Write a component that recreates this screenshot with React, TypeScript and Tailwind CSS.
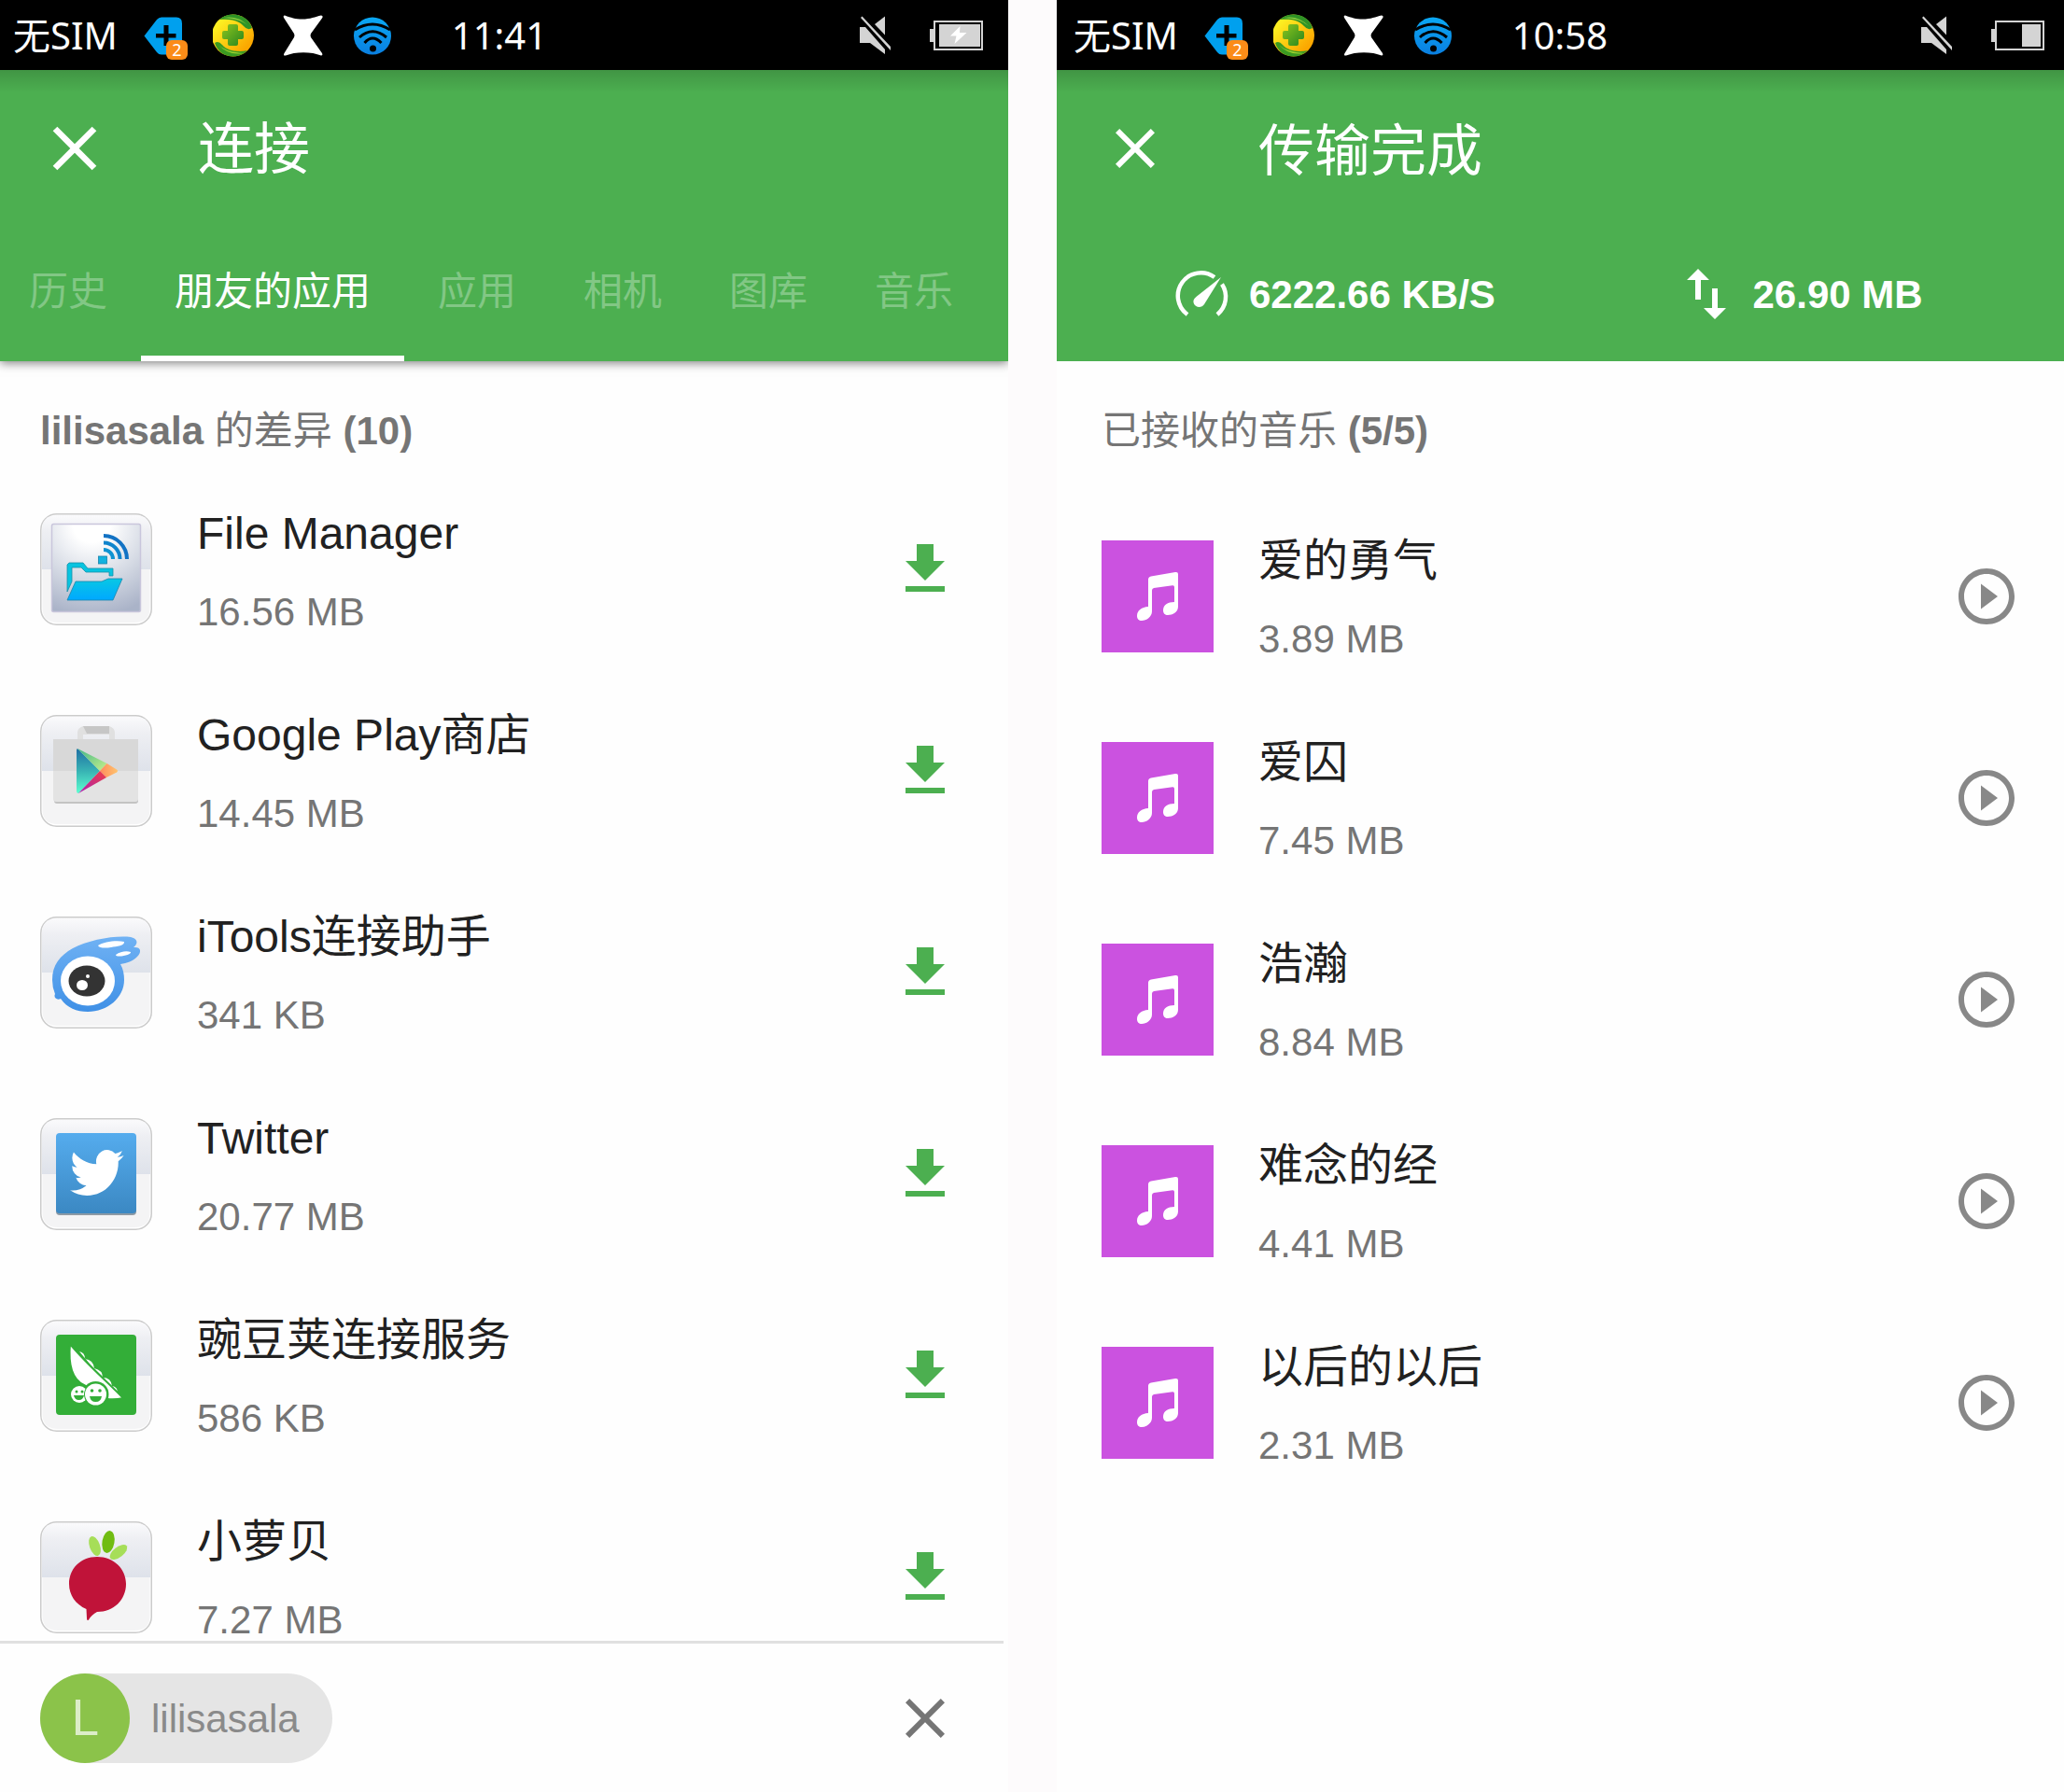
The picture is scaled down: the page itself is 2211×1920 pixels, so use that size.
import React from 'react';
import { MdClear, MdPlayCircleOutline, MdSwapVert } from 'react-icons/md';

const tabs = ['历史', '朋友的应用', '应用', '相机', '图库', '音乐'];

const apps = [
  { name: 'File Manager', size: '16.56 MB', art: <FileManagerArt /> },
  { name: 'Google Play商店', size: '14.45 MB', art: <PlayStoreArt /> },
  { name: 'iTools连接助手', size: '341 KB', art: <IToolsArt /> },
  { name: 'Twitter', size: '20.77 MB', art: <TwitterArt /> },
  { name: '豌豆荚连接服务', size: '586 KB', art: <PeaPodArt /> },
  { name: '小萝贝', size: '7.27 MB', art: <RadishArt /> },
];

const songs = [
  { name: '爱的勇气', size: '3.89 MB' },
  { name: '爱囚', size: '7.45 MB' },
  { name: '浩瀚', size: '8.84 MB' },
  { name: '难念的经', size: '4.41 MB' },
  { name: '以后的以后', size: '2.31 MB' },
];

function FileManagerArt() {
  return (
    <g>
      <defs>
        <radialGradient id="fmPlate" cx="0.45" cy="0" r="1.05">
          <stop offset="0.2" stopColor="#ffffff" />
          <stop offset="0.6" stopColor="#d5dae4" />
          <stop offset="1" stopColor="#aab3c8" />
        </radialGradient>
        <linearGradient id="fmFolder" x1="0" y1="0" x2="0" y2="1">
          <stop offset="0" stopColor="#08c8e4" />
          <stop offset="1" stopColor="#00a8ff" />
        </linearGradient>
      </defs>
      <rect x="12.5" y="11.5" width="95" height="94" rx="2" fill="url(#fmPlate)" stroke="#c9c6dc" strokeWidth="1.5" />
      <path d="M29 55l2-2h15l5 6h27v8h-4v-4H49l-5-5H34v15l-5 11z" fill="#08c4e0" stroke="#1b8fa8" strokeWidth="0.8" />
      <path d="M29 93l9-20h28l7-3h15l-10 23z" fill="url(#fmFolder)" stroke="#1b86ac" strokeWidth="0.8" />
      <rect x="62.500" y="46" width="9" height="8" fill="#12b2e0" stroke="#1783ac" strokeWidth="0.8" />
      <g fill="none" strokeWidth="4">
        <path d="M68 39a10 10 0 0 1 10 10" stroke="#0f93d2" />
        <path d="M68 31.500a17.500 17.500 0 0 1 17.500 17.500" stroke="#0f84cc" />
        <path d="M68 24a25 25 0 0 1 25 25" stroke="#1272c4" />
      </g>
    </g>
  );
}

function PlayStoreArt() {
  return (
    <g>
      <defs>
        <linearGradient id="gpTeal" x1="0" y1="0" x2="0" y2="1">
          <stop offset="0" stopColor="#1f6fa4" />
          <stop offset="0.5" stopColor="#38b3b4" />
          <stop offset="1" stopColor="#5dffd0" />
        </linearGradient>
        <linearGradient id="gpGreen" x1="0" y1="0" x2="1" y2="1">
          <stop offset="0" stopColor="#3fb787" />
          <stop offset="1" stopColor="#c9f08c" />
        </linearGradient>
        <linearGradient id="gpRed" x1="1" y1="0" x2="0" y2="1">
          <stop offset="0" stopColor="#f03e44" />
          <stop offset="1" stopColor="#a81fb4" />
        </linearGradient>
        <linearGradient id="gpOrange" x1="0" y1="0" x2="1" y2="0">
          <stop offset="0" stopColor="#ff8a5c" />
          <stop offset="1" stopColor="#ffc46e" />
        </linearGradient>
      </defs>
      <path d="M40 27v-8q0-5 6-7h28q6 2 6 7v8h-6v-6H46v6z" fill="#e0e0e0" />
      <path d="M46 12h28v8H50z" fill="#c6c6c6" />
      <rect x="15" y="28" width="90" height="67" rx="3" fill="#c3c3c3" />
      <path d="M14 26h91v64q0 3-3 3H17q-3 0-3-3z" fill="#e3e3e3" />
      <path d="M14 26h91v34H14z" fill="#d8d8d8" />
      <path d="M39 38q0-3 2-1l23 23-23 24q-2 0-2-3z" fill="url(#gpTeal)" />
      <path d="M40 36l31.500 16L64 60z" fill="url(#gpGreen)" />
      <path d="M71.500 52L82 58.500q2 1.500 0 3L71 67l-7-7z" fill="url(#gpOrange)" />
      <path d="M64 60l7 7-30 17z" fill="url(#gpRed)" />
    </g>
  );
}

function IToolsArt() {
  return (
    <g>
      <defs>
        <linearGradient id="itBlue" x1="0" y1="0" x2="0" y2="1">
          <stop offset="0" stopColor="#70b2f4" />
          <stop offset="1" stopColor="#3f90e6" />
        </linearGradient>
      </defs>
      <path
        d="M13 68C13 52 21 42 35 34C52 25 80 20 97 22C105 24 105 29 100 33C108 32 109 38 104 43C99 48 93 50 86 51C89 56 90 62 90 68C90 87 72 102 51 102C39 102 29 98 22 88C18 90 14 87 16 83Q13 76 13 68Z"
        fill="url(#itBlue)"
      />
      <ellipse cx="51" cy="69" rx="29" ry="26.500" fill="#ffffff" />
      <ellipse cx="50" cy="69" rx="19.500" ry="16.500" fill="#333333" />
      <ellipse cx="45" cy="73.500" rx="6" ry="5.500" fill="#ffffff" />
      <circle cx="51" cy="64" r="2" fill="#ffffff" />
      <path d="M62 31C68 27 82 25 90 27C91 31 82 32 76 33C70 34 63 34 62 31Z" fill="#ffffff" />
      <path d="M81 41C86 37.500 92 36.500 97 38C98 40 91 42.500 85 42.500Q81 42.500 81 41Z" fill="#ffffff" />
    </g>
  );
}

function TwitterArt() {
  return (
    <g>
      <defs>
        <linearGradient id="twBlue" x1="0" y1="0" x2="0" y2="1">
          <stop offset="0" stopColor="#55acee" />
          <stop offset="1" stopColor="#3b88c3" />
        </linearGradient>
      </defs>
      <rect x="17" y="18" width="86" height="86" rx="4" fill="#8d9aa5" />
      <rect x="17" y="16" width="86" height="86" rx="4" fill="url(#twBlue)" />
      <path
        transform="translate(32 28.500) scale(2.400 2.500)"
        fill="#ffffff"
        d="M23.953 4.57a10 10 0 01-2.825.775 4.958 4.958 0 002.163-2.723c-.951.555-2.005.959-3.127 1.184a4.92 4.92 0 00-8.384 4.482C7.69 8.095 4.067 6.13 1.64 3.162a4.822 4.822 0 00-.666 2.475c0 1.71.87 3.213 2.188 4.096a4.904 4.904 0 01-2.228-.616v.06a4.923 4.923 0 003.946 4.827 4.996 4.996 0 01-2.212.085 4.936 4.936 0 004.604 3.417 9.867 9.867 0 01-6.102 2.105c-.39 0-.779-.023-1.17-.067a13.995 13.995 0 007.557 2.209c9.053 0 13.998-7.496 13.998-13.985 0-.21 0-.42-.015-.63A9.935 9.935 0 0024 4.59z"
      />
    </g>
  );
}

function PeaPodArt() {
  return (
    <g>
      <rect x="17" y="16" width="86" height="86" rx="4" fill="#33ae38" />
      <path d="M42 34q6 1 6 8 9 1 10 10 9 2 9 10 9 0 10 9 6 1 6 7l-8-4z" fill="#ffffff" />
      <path d="M32 26C30 48 34 64 47 70L72 85Q80 86 89 84C72 66 52 50 32 26Z" fill="#ffffff" stroke="#33ae38" strokeWidth="2" />
      <circle cx="59.500" cy="80" r="14" fill="#33ae38" />
      <circle cx="42" cy="80" r="10.500" fill="#33ae38" />
      <circle cx="42" cy="80" r="9" fill="#ffffff" />
      <circle cx="59.500" cy="80" r="12.500" fill="#33ae38" />
      <circle cx="59.500" cy="80" r="11.500" fill="#ffffff" />
      <g fill="#33ae38">
        <circle cx="39" cy="77" r="1.500" />
        <circle cx="45" cy="77" r="1.500" />
        <path d="M36 81h11q-1 5-5.500 5t-5.500-5z" />
        <circle cx="55.500" cy="76" r="1.800" />
        <circle cx="64" cy="76" r="1.800" />
        <path d="M53 82h13q-1 6-6.500 6t-6.500-6z" />
      </g>
    </g>
  );
}

function RadishArt() {
  return (
    <g>
      <ellipse cx="58.500" cy="26.500" rx="5.500" ry="11" transform="rotate(-20 58.500 26.500)" fill="#a6de58" />
      <ellipse cx="73" cy="22" rx="6.500" ry="12" transform="rotate(10 73 22)" fill="#70bc12" />
      <ellipse cx="84" cy="33" rx="5.500" ry="11" transform="rotate(52 84 33)" fill="#a6de58" />
      <path d="M61 38C79 38 92 51 92 67C92 84 79 97 61 97Q55 100 52 105.500Q50 107 50 104L49.500 94C38 89 31 79 31 67C31 51 43 38 61 38Z" fill="#c01339" />
    </g>
  );
}

function AppTile({ children }: { children: React.ReactNode }) {
  return (
    <svg viewBox="0 0 120 120" className="size-[120px] shrink-0" aria-hidden="true">
      <defs>
        <linearGradient id="tileTop" x1="0" y1="0" x2="0" y2="1">
          <stop offset="0" stopColor="#fafafc" />
          <stop offset="0.3" stopColor="#eeeff3" />
          <stop offset="1" stopColor="#dee2ea" />
        </linearGradient>
      </defs>
      <rect x="0.75" y="0.75" width="118.500" height="118.500" rx="17" fill="#ffffff" stroke="#cbcbcb" strokeWidth="1.5" />
      <path d="M2 60V18Q2 2 18 2H102Q118 2 118 18V60Z" fill="url(#tileTop)" />
      <path d="M2.500 60H117.500V101Q117.500 117 101 117H19Q2.500 117 2.500 101Z" fill="#f4f4f5" />
      {children}
    </svg>
  );
}

function MusicTile() {
  return (
    <svg viewBox="0 0 120 120" className="size-[120px] shrink-0 bg-[#cb52e0]" aria-hidden="true">
      <path
        d="M50 42Q50 39 53 38.500L79 34Q82 33.500 82 36V71C82 77 76 80 71 80C68 80 66 78 66 75C66 69 71 66 78 66V50Q78 48 76 48.300L56 51Q54 51.500 54 53.500V76C54 82 48 86 43 86C40 86 38 84 38 81C38 75 43 71.500 50 71Z"
        fill="#ffffff"
      />
    </svg>
  );
}

function StatusIcons() {
  return (
    <div className="flex items-center gap-[26px] ml-7">
      <div className="relative size-12">
        <svg viewBox="0 0 48 48" className="size-12">
          <path d="M0.500 24.500L14 7Q16 4.500 19 4.500H35Q41 4.500 41 11V38Q41 44.500 35 44.500H19Q16 44.500 14 42Z" fill="#00a0ee" />
          <path d="M21.500 13h5v9h8v4.500h-8V35h-5v-8.500H13V22h8.500z" fill="#000000" />
        </svg>
        <span className="absolute left-6 top-[29px] w-[23px] h-[21px] rounded-md bg-[#fb8c18] text-white text-[18px] leading-[21px] text-center">
          2
        </span>
      </div>
      <svg viewBox="0 0 48 48" className="size-12">
        <defs>
          <linearGradient id="ballYellow" x1="0" y1="0" x2="1" y2="1">
            <stop offset="0.2" stopColor="#fdee21" />
            <stop offset="0.8" stopColor="#fba700" />
          </linearGradient>
          <linearGradient id="ballGreen" x1="0" y1="0" x2="1" y2="1">
            <stop offset="0" stopColor="#8cc51e" />
            <stop offset="1" stopColor="#27851e" />
          </linearGradient>
        </defs>
        <circle cx="21.500" cy="24" r="22.500" fill="url(#ballYellow)" />
        <path d="M7 7C18 -3 38 1 42 16Q37 19 33 14C27 7 17 6 7 7Z" fill="#2f9326" />
        <path d="M11 5Q27 2 38 14Q30 6 11 5Z" fill="#8ccb3c" />
        <path d="M37 40C26 51 7 48 2 32Q6 29 10 34C16 41 27 42 37 40Z" fill="#3a9a22" />
        <path d="M33 43Q17 46 6 34Q14 42 33 43Z" fill="#9ccf2e" />
        <path d="M18 12h7q2 0 2 2v5h4q2 0 2 2v5q0 2-2 2h-4v5q0 2-2 2h-7q-2 0-2-2v-5h-4q-2 0-2-2v-5q0-2 2-2h4v-5q0-2 2-2z" fill="url(#ballGreen)" />
      </svg>
      <svg viewBox="0 0 48 48" className="size-12">
        <path
          d="M3 2.500C10 5 14 6.500 22 6.500C30 6.500 36 4 42 2.500C44 3 44 4 43 5.500L31 22Q30 24 31 26L43 43Q44 45.500 42 45.500C32 41 14 41 4 45.500Q1 46 2.500 43L13 26Q14 24 13 22L2 5Q1 2.500 3 2.500Z"
          fill="#ffffff"
        />
      </svg>
      <svg viewBox="0 0 48 48" className="size-12">
        <defs>
          <linearGradient id="wifiBlue" x1="0" y1="0" x2="0" y2="1">
            <stop offset="0" stopColor="#0aa8f4" />
            <stop offset="1" stopColor="#0a7fe0" />
          </linearGradient>
        </defs>
        <circle cx="23" cy="24.500" r="20" fill="url(#wifiBlue)" />
        <g fill="none" stroke="#000000" strokeWidth="3">
          <path d="M4 18Q23 6 42 18" />
          <path d="M9 26Q23 13.500 38 26" />
          <path d="M14.500 32Q23 22 32.500 32" />
        </g>
        <circle cx="23.500" cy="38" r="3.500" fill="#000000" />
      </svg>
    </div>
  );
}

function StatusBar({ time, charging, className }: { time: string; charging?: boolean; className: string }) {
  return (
    <div className={`flex items-center h-[75px] shrink-0 bg-black text-white text-[40px] leading-[75px] font-['Noto_Sans','Noto_Sans_CJK_SC',sans-serif] ${className}`}>
      <span>无SIM</span>
      <StatusIcons />
      <time className="ml-15">{time}</time>
      <svg viewBox="0 0 33 42" className="w-[33px] h-[42px] ml-auto" fill="#d4d4d4">
        <path d="M0 12h6l21 24v5L11 29H0z" />
        <path d="M1 2L2.500 0.500L33 33v4z" />
        <path d="M27 0.500L16 9l11 11.500z" />
      </svg>
      <svg viewBox="0 0 57 32" className="w-[57px] h-8 ml-[42px]">
        <path d="M0 9h4v14H0z" fill="#d4d4d4" />
        <rect x="5" y="1" width="51" height="30" fill="none" stroke="#d4d4d4" strokeWidth="2" />
        {charging ? (
          <>
            <path d="M10 4h44v24H10z" fill="#d4d4d4" />
            <path d="M32.500 6L22 16.500h6.500L26.500 25L39.500 13H32z" fill="#ffffff" />
          </>
        ) : (
          <path d="M33 4h20v24H33z" fill="#d4d4d4" />
        )}
      </svg>
    </div>
  );
}

function SpeedIcon() {
  return (
    <svg viewBox="0 0 72 72" className="size-18 shrink-0" fill="none" aria-hidden="true">
      <path d="M20 58A24.500 24.500 0 0 1 49 18" stroke="#ffffff" strokeWidth="4.5" />
      <path d="M57 25.500A24.500 24.500 0 0 1 52 58" stroke="#ffffff" strokeWidth="4.5" />
      <path d="M56 18L38 47C35.500 51 29 51 27 46.500C25.500 43 27 41 30 38.500Z" fill="#ffffff" />
    </svg>
  );
}

function ListItem({ name, size, tile, action }: { name: string; size: string; tile: React.ReactNode; action: React.ReactNode }) {
  return (
    <li className="flex items-center h-[216px] shrink-0">
      {tile}
      <div className="flex-1 flex flex-col gap-[30px] ml-12 pt-0.5">
        <span className="text-5xl leading-[60px] text-[#212121]">{name}</span>
        <span className="text-[42px] leading-[48px] text-[#757575]">{size}</span>
      </div>
      {action}
    </li>
  );
}

function ConnectScreen() {
  return (
    <section className="flex flex-col h-screen bg-[#fefefe] overflow-hidden">
      <StatusBar time="11:41" charging className="pl-3.5 pr-[27px]" />
      <header className="relative shrink-0 bg-[#4caf50] text-white shadow-[0_2px_10px_rgba(0,0,0,0.5)]">
        <div className="absolute inset-x-0 top-0 h-6 bg-gradient-to-b from-black/15 to-transparent" />
        <div className="flex items-center h-[168px] pl-10">
          <button aria-label="关闭" className="shrink-0">
            <MdClear className="size-20" />
          </button>
          <h1 className="ml-[92px] pt-1 text-6xl">连接</h1>
        </div>
        <div role="tablist" className="flex h-36 overflow-hidden text-[42px]">
          {tabs.map((tab, i) => (
            <button
              key={tab}
              role="tab"
              aria-selected={i === 1}
              className={`shrink-0 pr-9 border-b-[6px] ${i === 0 ? 'pl-[31px]' : 'pl-9'} ${
                i === 1 ? 'border-white text-white' : 'border-transparent text-[#82c785]'
              }`}
            >
              {tab}
            </button>
          ))}
        </div>
      </header>

      <main className="flex-1 min-h-0 overflow-hidden pl-[43px] pr-[53px]">
        <h2 className="pt-[51px] pb-4 text-[42px] leading-[48px] font-bold text-[#757575]">
          lilisasala <span className="font-normal">的差异</span> (10)
        </h2>
        <ul>
          {apps.map((app) => (
            <ListItem
              key={app.name}
              name={app.name}
              size={app.size}
              tile={<AppTile>{app.art}</AppTile>}
              action={
                <button aria-label="下载" className="text-[#4caf50]">
                  <svg viewBox="0 0 24 24" className="size-18" fill="currentColor">
                    <path d="M19 9h-4V3H9v6H5l7 7 7-7zM5 18v2h14v-2H5z" />
                  </svg>
                </button>
              }
            />
          ))}
        </ul>
      </main>

      <footer className="shrink-0 flex items-center justify-between h-[162px] mr-[5px] pl-[43px] pr-12 border-t-[3px] border-[#e0e0e0]">
        <div className="flex items-center h-24 pr-[35px] rounded-full bg-[#e5e5e5]">
          <span className="flex items-center justify-center size-24 rounded-full bg-[#8bc34a] text-[#dcedc8] text-[54px] font-['Roboto',sans-serif]">
            L
          </span>
          <span className="ml-[23px] pt-0.5 text-[42px] text-[#8a8a8a]">lilisasala</span>
        </div>
        <button aria-label="断开" className="text-[#757575]">
          <MdClear className="size-18" />
        </button>
      </footer>
    </section>
  );
}

function TransferScreen() {
  return (
    <section className="flex flex-col h-screen bg-[#fefefe] overflow-hidden">
      <StatusBar time="10:58" className="pl-[18px] pr-[21px]" />
      <header className="relative shrink-0 bg-[#4caf50] text-white">
        <div className="absolute inset-x-0 top-0 h-6 bg-gradient-to-b from-black/15 to-transparent" />
        <div className="flex items-center h-[168px] pl-12">
          <button aria-label="关闭" className="shrink-0">
            <MdClear className="size-18" />
          </button>
          <h1 className="ml-24 pt-2 text-6xl">传输完成</h1>
        </div>
        <div className="grid grid-cols-2 h-36 text-[42px] font-bold">
          <div className="flex items-center gap-3.5 pl-[120px]">
            <SpeedIcon />
            <span>6222.66 KB/S</span>
          </div>
          <div className="flex items-center gap-3.5 pl-[120px]">
            <MdSwapVert className="size-18 shrink-0" />
            <span>26.90 MB</span>
          </div>
        </div>
      </header>

      <main className="flex-1 min-h-0 overflow-hidden pl-12 pr-[47px]">
        <h2 className="pt-[51px] pb-[45px] text-[42px] leading-[48px] font-bold text-[#757575]">
          <span className="font-normal">已接收的音乐</span> (5/5)
        </h2>
        <ul>
          {songs.map((song) => (
            <ListItem
              key={song.name}
              name={song.name}
              size={song.size}
              tile={<MusicTile />}
              action={
                <button aria-label="播放" className="text-[#888888]">
                  <MdPlayCircleOutline className="size-18" />
                </button>
              }
            />
          ))}
        </ul>
      </main>
    </section>
  );
}

export default function App() {
  return (
    <div className="grid grid-cols-[1080fr_1079fr] gap-[52px] min-h-screen bg-[#fdfbfc] font-['Liberation_Sans','Noto_Sans_CJK_SC',sans-serif]">
      <ConnectScreen />
      <TransferScreen />
    </div>
  );
}
